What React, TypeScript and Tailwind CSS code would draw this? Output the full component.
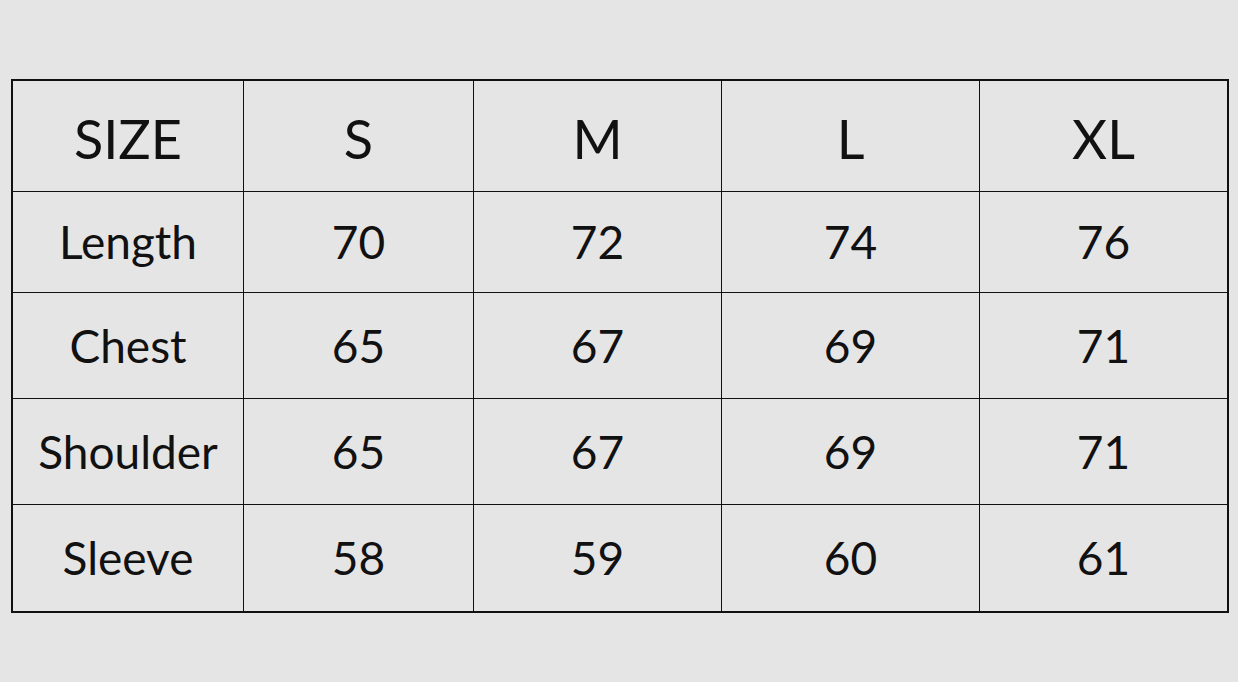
import { Fragment } from "react";

const HEAD = ["SIZE", "S", "M", "L", "XL"];

const ROWS: [string, number[]][] = [
  ["Length", [70, 72, 74, 76]],
  ["Chest", [65, 67, 69, 71]],
  ["Shoulder", [65, 67, 69, 71]],
  ["Sleeve", [58, 59, 60, 61]],
];

export default function App() {
  return (
    <div className="min-h-[682px] w-full bg-[#e6e5e6] pt-[79px] pl-[11px] font-['Lato',sans-serif] text-[#111]">
      {/* size chart */}
      <div className="w-[1218px] border-2 border-[#111]">
        <div className="grid grid-cols-[230px_229px_247px_257px_247px] grid-rows-[110px_100px_105px_105px_106px] gap-px bg-[#111]">
          {HEAD.map((h) => (
            <div
              key={h}
              className="flex items-center justify-center bg-[#e6e5e6] pt-[6px] text-[54px] leading-none"
            >
              {h}
            </div>
          ))}
          {ROWS.map(([label, vals]) => (
            <Fragment key={label}>
              <div className="flex items-center justify-center bg-[#e6e5e6] text-[46px] leading-none">
                {label}
              </div>
              {vals.map((v, i) => (
                <div
                  key={i}
                  className="flex items-center justify-center bg-[#e6e5e6] text-[46px] leading-none"
                >
                  {v}
                </div>
              ))}
            </Fragment>
          ))}
        </div>
      </div>
    </div>
  );
}
